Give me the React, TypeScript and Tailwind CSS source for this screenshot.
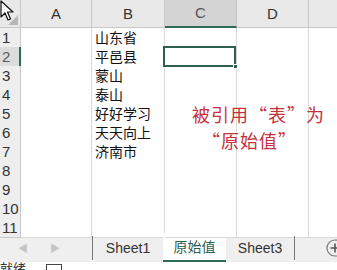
const cols = ['A', 'B', 'C', 'D'];

const data: Record<number, string> = {
  1: '山东省',
  2: '平邑县',
  3: '蒙山',
  4: '泰山',
  5: '好好学习',
  6: '天天向上',
  7: '济南市',
};

const font = { fontFamily: '"Liberation Sans", "Noto Sans CJK SC", sans-serif' };
const cjk = { fontFamily: '"Noto Sans CJK SC", "Liberation Sans", sans-serif' };

function Cursor() {
  return (
    <svg className="absolute left-0 top-0 z-20" width="14" height="22" viewBox="0 0 14 22">
      <path d="M1 1 L1 17 L5 13 L8 20 L10.5 19 L7.5 12 L13 12 Z" fill="#fff" stroke="#111" strokeWidth="1.2" strokeLinejoin="round" />
    </svg>
  );
}

function Row({ n, h = 'h-[19px]' }: { n: number; h?: string }) {
  const selected = n === 2;
  return (
    <div className={`grid grid-cols-[21px_71px_73px_72px_72px_1fr] ${h}`}>
      <div
        className={`border-b border-r pl-[2px] text-[15px] leading-[19px] ${
          selected ? 'border-r-[#2e6b55] border-r-2 bg-[#dcdcdc] text-[#5a5a5a] border-b-[#c8c8c8]' : 'border-[#c8c8c8] bg-[#eeeeee] text-[#333]'
        }`}
        style={font}
      >
        {n}
      </div>
      <div className="border-b border-r border-[#d9d9d9] bg-white" />
      <div className="border-b border-r border-[#d9d9d9] bg-white pl-[3px] text-[14px] leading-[19px] text-[#111]" style={cjk}>
        {data[n] || ''}
      </div>
      <div className="relative border-b border-r border-[#d9d9d9] bg-white">
        {selected && (
          <div className="absolute -left-[2px] -top-[1px] bottom-[-1px] right-0 z-10 border-2 border-[#2f5f4d]">
            <div className="absolute -bottom-[4px] -right-[4px] h-[5px] w-[5px] border border-white bg-[#2f5f4d]" />
          </div>
        )}
      </div>
      <div className="border-b border-r border-[#d9d9d9] bg-white" />
      <div className="border-b border-[#d9d9d9] bg-white" />
    </div>
  );
}

export default function App() {
  return (
    <div className="relative h-[270px] w-[337px] overflow-hidden bg-white">
      <Cursor />

      {/* column headers */}
      <div className="grid h-[28px] grid-cols-[21px_71px_73px_72px_72px_1fr] bg-[#e9e9e9]">
        <div className="relative border-b border-r border-[#c8c8c8]">
          <svg className="absolute bottom-[2px] right-[2px]" width="10" height="10" viewBox="0 0 10 10">
            <path d="M10 0 L10 10 L0 10 Z" fill="#b7b7b7" />
          </svg>
        </div>
        {cols.map((c) => (
          <div
            key={c}
            className={`flex items-end justify-center border-r pb-[2px] text-[15px] ${
              c === 'C'
                ? 'border-b-2 border-b-[#2e6b55] border-r-[#c8c8c8] bg-[#d4d4d4] text-[#555]'
                : 'border-b border-[#c8c8c8] text-[#333]'
            }`}
            style={font}
          >
            {c}
          </div>
        ))}
        <div className="border-b border-[#c8c8c8]" />
      </div>

      {[1, 2, 3, 4, 5, 6, 7, 8, 9, 10].map((n) => (
        <Row key={n} n={n} />
      ))}
      <Row n={11} h="h-[15px]" />

      {/* text box */}
      <div className="absolute left-[192px] top-[101px] z-10 text-[18px] leading-[26px] tracking-[1px] text-[#c5303a]" style={cjk}>
        <div>被引用“表”为</div>
        <div className="ml-[10px]">“原始值”</div>
      </div>

      {/* sheet tabs */}
      <div className="flex h-[29px] items-stretch border-t border-[#c8c8c8] bg-[#efefef] text-[14px] text-[#333]" style={font}>
        <div className="flex w-[92px] items-center gap-[22px] pl-[18px] text-[#c4c4c4]">
          <span className="text-[10px]">◀</span>
          <span className="text-[10px]">▶</span>
        </div>
        <div className="my-[2px] w-px bg-[#777]" />
        <div className="flex w-[70px] items-center justify-center">Sheet1</div>
        <div className="flex w-[63px] -mt-px items-center justify-center border-b-2 border-[#2e6b55] bg-white text-[#2e5e4d]" style={cjk}>
          原始值
        </div>
        <div className="flex w-[68px] items-center justify-center">Sheet3</div>
        <div className="my-[2px] w-px bg-[#777]" />
        <div className="flex flex-1 items-center justify-end">
          <svg className="-mr-[7px]" width="18" height="18" viewBox="0 0 18 18">
            <circle cx="9" cy="9" r="8" fill="none" stroke="#777" strokeWidth="1.2" />
            <path d="M9 4.5 V13.5 M4.5 9 H13.5" stroke="#555" strokeWidth="1.6" />
          </svg>
        </div>
      </div>

      {/* status bar */}
      <div className="flex h-[8px] items-start gap-[20px] overflow-hidden bg-white text-[13px] leading-[14px] text-[#333]">
        <span className="-mt-[1px]" style={cjk}>就绪</span>
        <div className="mt-[2px] h-[10px] w-[16px] border border-[#444]" />
      </div>
    </div>
  );
}
